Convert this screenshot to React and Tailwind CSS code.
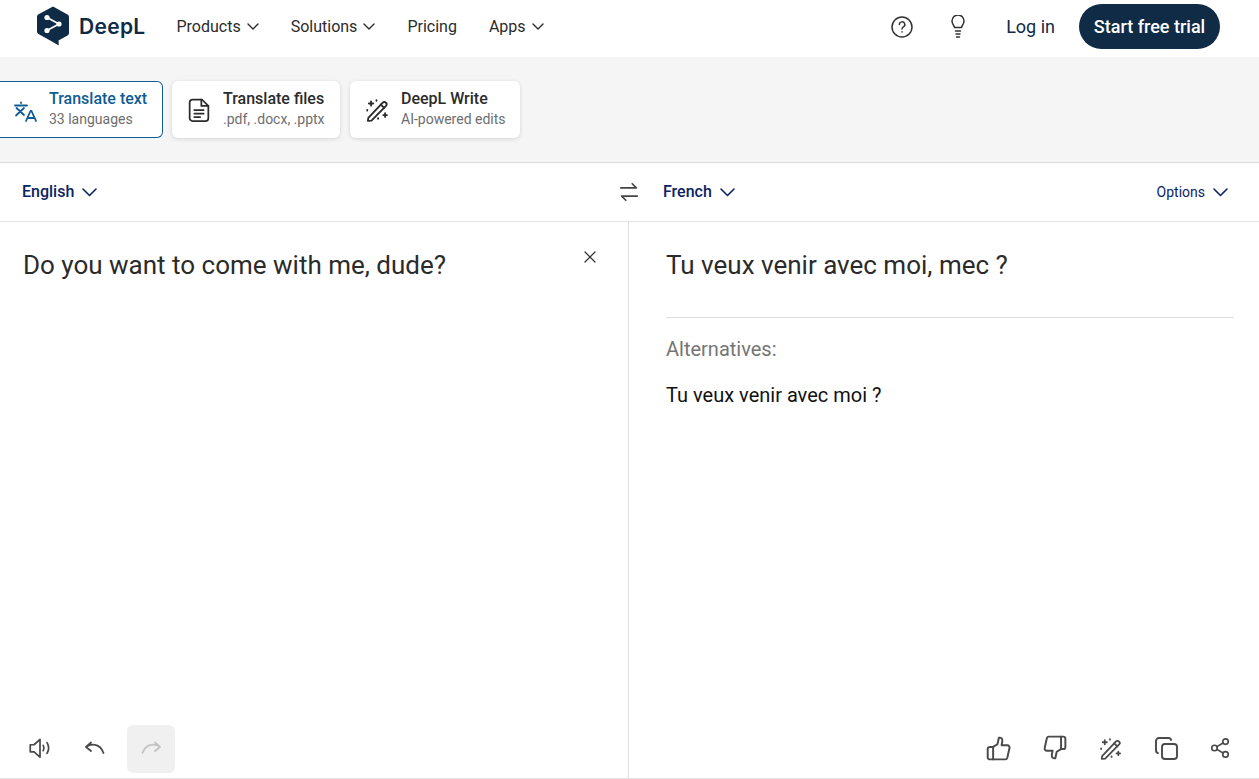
import React from "react";
import { X } from "lucide-react";

function Svg({ className = "", size = 24, sw = 1.6, children, vb = "0 0 24 24" }) {
  return (
    <svg width={size} height={size} viewBox={vb} fill="none" stroke="currentColor" strokeWidth={sw} strokeLinecap="round" strokeLinejoin="round" className={className}>
      {children}
    </svg>
  );
}

function ChevSmall() {
  return (
    <svg width="12" height="7" viewBox="0 0 12 7" fill="none" stroke="currentColor" strokeWidth="1.4" strokeLinecap="round" strokeLinejoin="round">
      <path d="M1 1l5 5 5-5" />
    </svg>
  );
}

function ChevLang() {
  return (
    <svg width="15" height="9" viewBox="0 0 15 9" fill="none" stroke="currentColor" strokeWidth="1.6" strokeLinecap="round" strokeLinejoin="round">
      <path d="M1 1l6.500 6.500L14 1" />
    </svg>
  );
}

function Logo() {
  return (
    <svg width="34" height="40" viewBox="0 0 34 40" className="mb-[2px] block">
      <path d="M17 0.5 L31.500 8.500 Q33 9.400 33 11 V27 Q33 28.600 31.500 29.500 L22.500 34.600 L22.800 39.500 L15.500 35.200 L2.500 28 Q1 27 1 25.500 V10.500 Q1 9 2.500 8.200 Z" fill="#0f2b46" />
      <path d="M11 11.500 L23 18 L11 24.500" fill="none" stroke="#fff" strokeWidth="1.700" />
      <circle cx="11" cy="11.500" r="2.600" fill="#fff" />
      <circle cx="11" cy="24.500" r="2.600" fill="#fff" />
      <circle cx="23" cy="18" r="2.600" fill="#fff" />
    </svg>
  );
}

function NavItem({ label, chevron = true }) {
  return (
    <div className="flex items-center gap-[6px] text-[16px] text-[#2b2b2b]">
      <span>{label}</span>
      {chevron && <ChevSmall />}
    </div>
  );
}

function TranslateIcon() {
  return (
    <Svg size={24} sw={1.8}>
      <path d="M2 7.500h12M8 4.500v.6M3.500 10l7.500 7M11 10l-8 7.500" />
      <path d="M13 23l4.500-10h1L23 23M14.500 20h7" />
    </Svg>
  );
}

function FileIcon() {
  return (
    <Svg size={28} sw={1.500}>
      <path d="M6.500 3h8l5.500 5.500V19a2.500 2.500 0 0 1-2.500 2.500h-11A2.500 2.500 0 0 1 4 19V5.500A2.500 2.500 0 0 1 6.500 3z" />
      <path d="M14 3v5.500h6M8 12h8M8 15h8M8 18h5" />
    </Svg>
  );
}

function WandIcon({ size = 24 }) {
  return (
    <Svg size={size} sw={1.700}>
      <path d="M4 19.300 17.300 5.200a2 2 0 0 1 2.900 0l.1.1a2 2 0 0 1 0 2.800L6.900 21.800 3.600 22z" />
      <path d="M15.600 7 18.600 10" />
      <path d="M6.500 4v4M4.500 6h4M19.500 15v3.400M17.800 16.700h3.400M13 19.500v.6M11.500 3v.5M3 12v.5" />
    </Svg>
  );
}

function Tab({ active, icon, title, sub, className = "", iconW }) {
  return (
    <div
      className={
        "flex h-[57px] items-center rounded-[6px] bg-white " +
        (active
          ? "border border-[#0f5c94] text-[#0f5c94] "
          : "shadow-[0_1px_4px_rgba(0,0,0,0.14)] text-[#2b2b2b] ") +
        className
      }
    >
      <div className={"flex shrink-0 justify-center " + iconW}>{icon}</div>
      <div className="flex flex-col pb-[2px]">
        <span className={"text-[16px] leading-[20px] font-medium " + (active ? "text-[#0f5c94]" : "text-[#2b2b2b]")}>{title}</span>
        <span className="text-[14px] leading-[20px] text-[#6e6e6e]">{sub}</span>
      </div>
    </div>
  );
}

function Tool({ children, disabled, className = "" }) {
  return (
    <div className={"flex h-[48px] w-[48px] items-center justify-center rounded-[6px] pb-[2px] " + (disabled ? "bg-[#f0f0f0] text-[#c4c4c4] " : "text-[#4a4a4a] ") + className}>
      {children}
    </div>
  );
}

export default function App() {
  return (
    <div className="flex h-[779px] w-[1259px] flex-col overflow-hidden bg-white font-['Roboto',sans-serif]">
      <header className="flex h-[57px] shrink-0 items-center pb-[4px] pl-[36px] pr-[39px]">
        <div className="flex items-center">
          <Logo />
          <span className="ml-[9px] font-['Inter',sans-serif] text-[21px] font-semibold tracking-[0.3px] text-[#0f2b46]">DeepL</span>
        </div>
        <nav className="ml-[31px] flex items-center gap-[32px]">
          <NavItem label="Products" />
          <NavItem label="Solutions" />
          <NavItem label="Pricing" chevron={false} />
          <NavItem label="Apps" />
        </nav>
        <div className="ml-auto flex items-center">
          <div className="text-[#333]">
            <Svg size={24} sw={1.500}>
              <circle cx="12" cy="12" r="10" />
              <path d="M9.400 9.500a2.700 2.700 0 1 1 4 2.400c-.9.5-1.400 1-1.400 2" />
              <path d="M12 16.800v.2" />
            </Svg>
          </div>
          <div className="ml-[32px] text-[#333]">
            <Svg size={24} sw={1.500}>
              <path d="M8.500 15.500c0-1.600-2.500-3-2.500-6.500a6 6 0 0 1 12 0c0 3.500-2.500 4.900-2.500 6.500z" transform="translate(0 -3)" />
              <path d="M9.500 16h5M10 19h4M10.500 22h3" />
            </Svg>
          </div>
          <span className="ml-[36px] text-[18px] text-[#0f2b46]">Log in</span>
          <div className="ml-[24px] flex h-[45px] w-[141px] items-center justify-center rounded-full bg-[#0f2b46] text-[18px] font-medium text-white">
            Start free trial
          </div>
        </div>
      </header>

      <div className="flex h-[106px] shrink-0 items-start gap-[9px] border-b border-[#dcdcdc] bg-[#f5f5f5] pt-[24px]">
        <Tab active iconW="w-[49px]" className="w-[163px] rounded-l-none border-l-0" icon={<TranslateIcon />} title="Translate text" sub="33 languages" />
        <Tab iconW="w-[51px]" className="mr-[1px] w-[168px]" icon={<div className="ml-[3px]"><FileIcon /></div>} title="Translate files" sub=".pdf, .docx, .pptx" />
        <Tab iconW="w-[51px]" className="w-[170px]" icon={<div className="ml-[3px]"><WandIcon size={26} /></div>} title="DeepL Write" sub="AI-powered edits" />
      </div>

      <div className="flex h-[59px] shrink-0 items-center border-b border-[#e3e3e3] text-[#0a2463]">
        <div className="flex w-[609px] items-center gap-[8px] pl-[22px]">
          <span className="text-[16px] font-medium">English</span>
          <ChevLang />
        </div>
        <div className="flex w-[40px] justify-center text-[#444]">
          <Svg size={22} sw={1.800}>
            <path d="M3 7.500h17M15.500 3 20 7.500M21 16.500H4M8.500 21 4 16.500" />
          </Svg>
        </div>
        <div className="ml-[14px] flex items-center gap-[8px]">
          <span className="text-[16px] font-medium">French</span>
          <ChevLang />
        </div>
        <div className="ml-auto flex items-center gap-[8px] pr-[31px]">
          <span className="text-[14px]">Options</span>
          <ChevLang />
        </div>
      </div>

      <main className="flex min-h-0 flex-1 border-b border-[#e3e3e3]">
        <section className="flex w-[629px] shrink-0 flex-col border-r border-[#dedede]">
          <div className="flex flex-1 items-start justify-between pl-[23px] pr-[28px] pt-[25px]">
            <p className="mt-[1px] text-[26px] leading-[34px] text-[#2b2b2b]">Do you want to come with me, dude?</p>
            <X size={20} strokeWidth={1.500} className="text-[#333]" />
          </div>
          <div className="flex items-center gap-[8px] pb-[5px] pl-[15px]">
            <Tool className="pl-[2px]">
              <Svg size={26} sw={1.600}>
                <path d="M3 9v6.500h3.500l5.500 5V4L6.500 9z" />
                <path d="M15 9.500c.8 1.500.8 3.500 0 5M18.500 7c1.800 3 1.800 7 0 10" />
              </Svg>
            </Tool>
            <Tool>
              <Svg size={24} sw={1.800}>
                <path d="M3 11 8 6.500M3 11 8 15M3 11c5-3.500 14-4 17.500 6" />
              </Svg>
            </Tool>
            <Tool disabled>
              <Svg size={24} sw={1.800}>
                <path d="M21 11 16 6.500M21 11 16 15M21 11c-5-3.500-14-4-17.500 6" />
              </Svg>
            </Tool>
          </div>
        </section>

        <section className="flex min-w-0 flex-1 flex-col">
          <div className="flex-1 pl-[37px] pr-[25px] pt-[26px]">
            <p className="text-[26px] leading-[34px] text-[#2b2b2b]">Tu veux venir avec moi, mec ?</p>
            <div className="mt-[35px] border-t border-[#dedede] pt-[19px]">
              <p className="text-[20px] leading-[24px] text-[#757575]">Alternatives:</p>
              <p className="mt-[22px] text-[20px] leading-[24px] text-[#111]">Tu veux venir avec moi ?</p>
            </div>
          </div>
          <div className="flex items-center justify-end gap-[8px] pb-[5px] pr-[15px]">
            <Tool>
              <Svg size={26} sw={1.800}>
                <path d="M7.500 11v11.500H4.500a2 2 0 0 1-2-2V13a2 2 0 0 1 2-2z" />
                <path d="M7.500 11 11.500 8.500 12.800 2.500c2.200-.5 3.500 1.200 3.200 3.300L15.300 9.500h5.300a2 2 0 0 1 2 2.500l-2 9a2 2 0 0 1-2 1.500H7.500" />
              </Svg>
            </Tool>
            <Tool>
              <Svg size={26} sw={1.800}>
                <path d="M18.500 13V1.500h2a2 2 0 0 1 2 2V11a2 2 0 0 1-2 2z" />
                <path d="M18.500 13 14.500 15.500 13.200 21.500c-2.200.5-3.500-1.200-3.200-3.300l.7-3.700H5.400a2 2 0 0 1-2-2.500l2-9a2 2 0 0 1 2-1.500h11.100" />
              </Svg>
            </Tool>
            <Tool><WandIcon size={25} /></Tool>
            <Tool>
              <Svg size={24} sw={1.900}>
                <rect x="8" y="8" width="15" height="15" rx="3" />
                <path d="M4 17a2.500 2.500 0 0 1-2-2.500V5a3 3 0 0 1 3-3h9.500A2.500 2.500 0 0 1 17 4" />
              </Svg>
            </Tool>
            <Tool className="-ml-[2px]">
              <Svg size={22} sw={1.800}>
                <circle cx="18" cy="5" r="3" />
                <circle cx="6" cy="12" r="3" />
                <circle cx="18" cy="19" r="3" />
                <path d="M8.600 10.500 15.400 6.500M8.600 13.500 15.400 17.500" />
              </Svg>
            </Tool>
          </div>
        </section>
      </main>
    </div>
  );
}
